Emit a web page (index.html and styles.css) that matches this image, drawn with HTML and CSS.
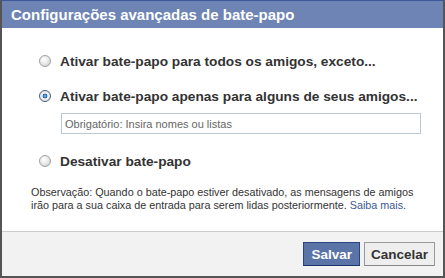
FILE: index.html
```html
<!DOCTYPE html>
<html lang="pt-BR">
<head>
    <meta charset="UTF-8">
    <title>Configurações avançadas de bate-papo</title>
    <link rel="stylesheet" href="styles.css">
</head>
<body>
<div class="dialog">
    <div class="dialog-title">Configurações avançadas de bate-papo</div>
    <div class="dialog-body">
        <label class="option">
            <span class="radio"></span>
            <span>Ativar bate-papo para todos os amigos, exceto...</span>
        </label>
        <label class="option option-checked">
            <span class="radio checked"></span>
            <span>Ativar bate-papo apenas para alguns de seus amigos...</span>
        </label>
        <div class="names-box">Obrigatório: Insira nomes ou listas</div>
        <label class="option option-last">
            <span class="radio"></span>
            <span>Desativar bate-papo</span>
        </label>
        <p class="note">
            <span class="note-line">Observação: Quando o bate-papo estiver desativado, as mensagens de amigos</span>
            <span class="note-line">irão para a sua caixa de entrada para serem lidas posteriormente. <a href="#">Saiba mais</a>.</span>
        </p>
    </div>
    <div class="dialog-footer">
        <button class="btn btn-primary">Salvar</button>
        <button class="btn">Cancelar</button>
    </div>
</div>
</body>
</html>
```

FILE: styles.css
```css
/* Dialog */
body {
    margin: 0;
    padding: 0;
    font-family: "Liberation Sans", sans-serif;
    background: #fff;
}

.dialog {
    width: 441px;
    height: 275px;
    border: 2px solid #555;
    border-top: 1px solid #3b5998;
    display: flex;
    flex-direction: column;
    background: #fff;
}

.dialog-title {
    background-color: #6d84b4;
    color: #fff;
    font-weight: bold;
    font-size: 15px;
    height: 27px;
    line-height: 28px;
    padding-left: 9px;
}

.dialog-body {
    flex: 1;
    padding: 25px 0 0 29px;
}

.option {
    display: flex;
    align-items: center;
    height: 16px;
    padding-left: 9px;
    font-weight: bold;
    font-size: 13.7px;
    color: #333;
    margin-bottom: 19px;
}

.option-checked {
    margin-bottom: 9px;
}

.option-last {
    margin-top: 19px;
    margin-bottom: 17px;
}

.radio {
    width: 12px;
    height: 12px;
    border-radius: 50%;
    border: 1px solid #a0a0a0;
    background: radial-gradient(circle at 40% 35%, #fff 0, #e8e8e8 50%, #c4c4c4 100%);
    margin-right: 9px;
    margin-left: -1px;
    box-sizing: border-box;
    flex-shrink: 0;
}

.radio.checked {
    border-color: #4d5d7a;
    background: radial-gradient(circle, #7cc0f6 0, #1e62b5 30%, #f4f4f4 38%, #d4d4d4 100%);
}

.names-box {
    margin-left: 30px;
    width: 355px;
    height: 19px;
    border: 1px solid #bdc7d8;
    font-size: 11px;
    color: #666;
    line-height: 20px;
    padding-left: 3px;
}

.note {
    margin: 0;
    font-size: 10.8px;
    line-height: 13px;
    color: #333;
}

.note-line {
    display: block;
    white-space: nowrap;
}

.note a {
    color: #3b5998;
    text-decoration: none;
}

.dialog-footer {
    height: 44px;
    border-top: 1px solid #ccc;
    background-color: #f2f2f2;
    display: flex;
    justify-content: flex-end;
    align-items: center;
    gap: 4px;
    padding-right: 8px;
}

.btn {
    font-family: "Liberation Sans", sans-serif;
    font-weight: bold;
    font-size: 13.5px;
    height: 24px;
    padding: 0 6px;
    border: 1px solid #999;
    border-bottom-color: #888;
    background: #eee;
    color: #333;
    cursor: pointer;
}

.btn-primary {
    padding: 0 7px;
    background-color: #5b74a8;
    border-color: #29447e #29447e #1a356e;
    color: #fff;
}
```
